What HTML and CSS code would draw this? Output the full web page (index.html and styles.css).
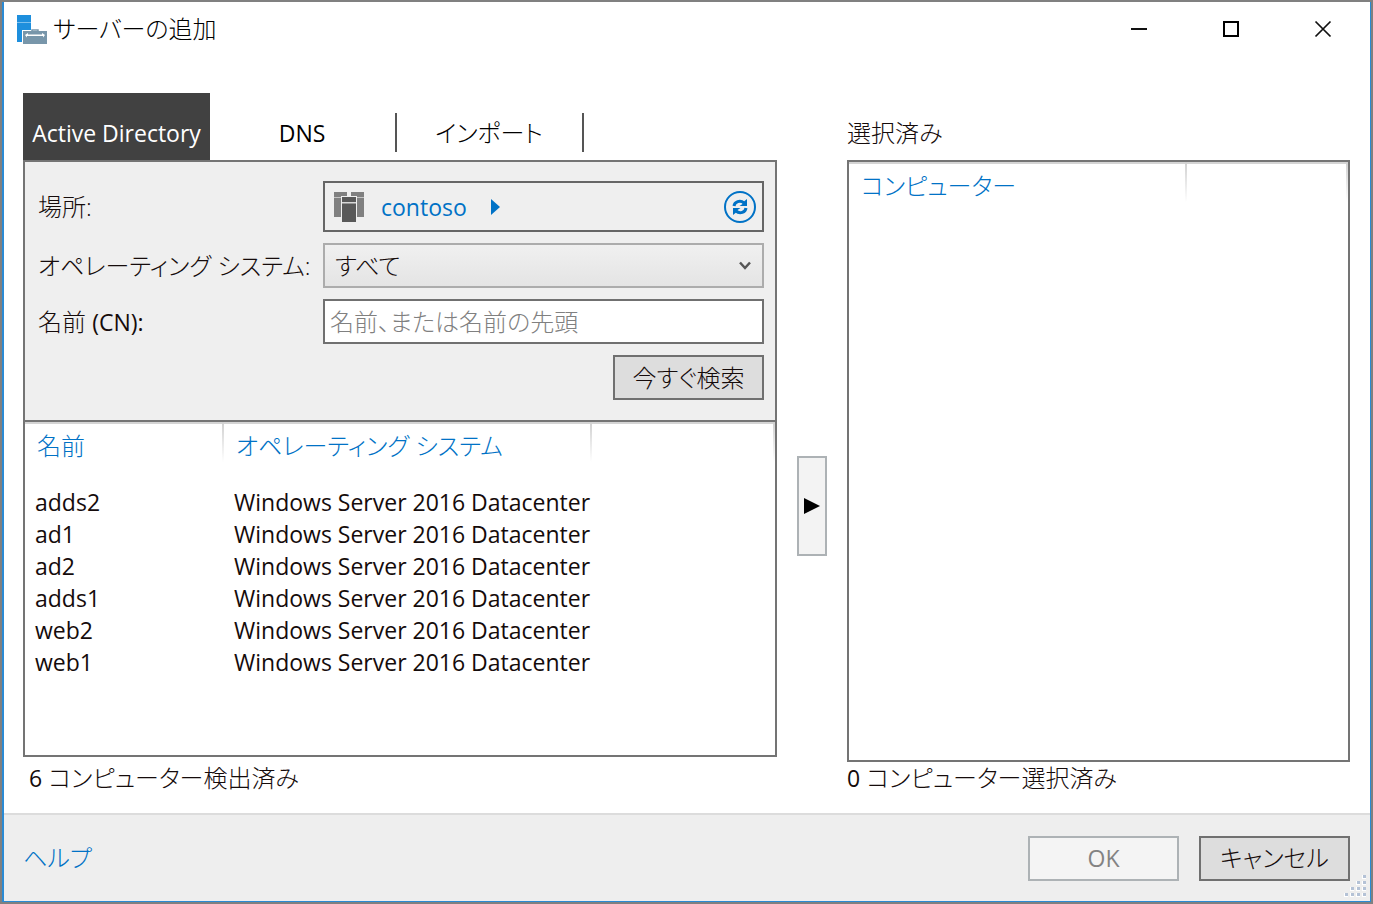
FILE: index.html
```html
<!DOCTYPE html>
<html lang="ja">
<head>
<meta charset="utf-8">
<title>サーバーの追加</title>
<link rel="stylesheet" href="styles.css">
</head>
<body>
<div class="window">
  <header class="titlebar">
    <svg class="app-icon" width="31" height="30" viewBox="0 0 31 30" aria-hidden="true">
      <path fill="#1e8fdd" d="M0 1h14v27H0z"/>
      <path fill="#7cc0ee" d="M0 8h14v1H0z"/>
      <path fill="#fff" d="M5 16h9v-2h9v2h8v14H5z"/>
      <path fill="none" stroke="#7896aa" stroke-width="1.500" d="M15 18v-2h6v2"/>
      <path fill="#7896aa" d="M6 17h24v13H6z"/>
      <path fill="#fff" d="M8 21l3-2v1.500h14V19l3 2-2 2.500v-1.500H10v1.500z"/>
    </svg>
    <h1 class="title">サーバーの追加</h1>
    <div class="window-controls">
      <button class="window-button" type="button" aria-label="最小化"><svg width="18" height="18" viewBox="0 0 18 18"><path d="M1 9h16" stroke="#111" stroke-width="2"/></svg></button>
      <button class="window-button" type="button" aria-label="最大化"><svg width="18" height="18" viewBox="0 0 18 18"><path d="M2 2h14v14H2z" fill="none" stroke="#000" stroke-width="2"/></svg></button>
      <button class="window-button" type="button" aria-label="閉じる"><svg width="18" height="18" viewBox="0 0 18 18"><path d="M1.500 1.500l15 15M16.500 1.500l-15 15" stroke="#111" stroke-width="1.700"/></svg></button>
    </div>
  </header>

  <main class="content">
    <section class="source">
      <div class="tabs" role="tablist">
        <button class="tab tab-active latin" type="button" role="tab" aria-selected="true">Active Directory</button>
        <button class="tab latin" type="button" role="tab" aria-selected="false">DNS</button>
        <button class="tab" type="button" role="tab" aria-selected="false">インポート</button>
      </div>
      <div class="panel source-panel">
        <form class="search">
          <span class="label" id="location-label">場所:</span>
          <div class="location" role="group" aria-labelledby="location-label">
            <svg width="32" height="32" viewBox="0 0 32 32" aria-hidden="true">
              <path fill="#808080" d="M1 1h13v25H1zM18 1h13v25H18z"/>
              <path fill="#c4c4c4" d="M1 6h13v1H1zM18 6h13v1H18z"/>
              <path fill="#efefef" d="M8 5h16v27H8z"/>
              <path fill="#595959" d="M9 6h14v25H9z"/>
              <path fill="#d8d8d8" d="M9 11h14v1.500H9z"/>
            </svg>
            <button class="crumb latin" type="button">contoso<svg width="9" height="16" viewBox="0 0 9 16" aria-hidden="true"><path fill="#0072c6" d="M0 0l9 8-9 8z"/></svg></button>
            <button class="refresh" type="button" aria-label="更新">
              <svg width="32" height="32" viewBox="0 0 32 32" fill="none" stroke="#0072c6">
                <circle cx="16" cy="16" r="15" stroke-width="2"/>
                <path stroke-width="3" d="M10 15c.5-4 6-6.500 10-3M22 17c-.5 4-6 6.500-10 3"/>
                <path fill="#0072c6" stroke="none" d="M23 8v7h-7.500l3-2 2-3zM9 24v-7h7.500l-3 2-2 3z"/>
              </svg>
            </button>
          </div>
          <label class="label" for="os">オペレーティング システム:</label>
          <div class="select">
            <select class="select-field" id="os"><option>すべて</option></select>
            <svg class="select-arrow" width="12" height="10" viewBox="0 0 12 10" aria-hidden="true"><path fill="none" stroke="#555" stroke-width="2.500" d="M1 1.500l5 5.500 5-5.500"/></svg>
          </div>
          <label class="label" for="cn">名前 <span class="latin">(CN):</span></label>
          <input class="text-field" id="cn" type="text" placeholder="名前、または名前の先頭">
          <button class="button search-button" type="button">今すぐ検索</button>
        </form>
        <table class="list">
          <colgroup><col class="col-name"><col class="col-os"><col></colgroup>
          <thead><tr><th>名前</th><th>オペレーティング システム</th><th></th></tr></thead>
          <tbody class="latin">
            <tr><td>adds2</td><td>Windows Server 2016 Datacenter</td><td></td></tr>
            <tr><td>ad1</td><td>Windows Server 2016 Datacenter</td><td></td></tr>
            <tr><td>ad2</td><td>Windows Server 2016 Datacenter</td><td></td></tr>
            <tr><td>adds1</td><td>Windows Server 2016 Datacenter</td><td></td></tr>
            <tr><td>web2</td><td>Windows Server 2016 Datacenter</td><td></td></tr>
            <tr><td>web1</td><td>Windows Server 2016 Datacenter</td><td></td></tr>
          </tbody>
        </table>
      </div>
      <p class="status"><span class="latin">6</span> コンピューター検出済み</p>
    </section>

    <button class="add" type="button" aria-label="追加"><svg width="16" height="16" viewBox="0 0 16 16"><path d="M0 0l16 8-16 8z"/></svg></button>

    <section class="selected">
      <h2 class="heading">選択済み</h2>
      <div class="panel">
        <table class="list">
          <colgroup><col class="col-computer"><col></colgroup>
          <thead><tr><th>コンピューター</th><th></th></tr></thead>
        </table>
      </div>
      <p class="status"><span class="latin">0</span> コンピューター選択済み</p>
    </section>
  </main>

  <footer class="footer">
    <a class="help" href="#">ヘルプ</a>
    <button class="button latin" type="button" disabled>OK</button>
    <button class="button" type="button">キャンセル</button>
    <svg class="grip" width="24" height="24" viewBox="0 0 24 24" aria-hidden="true">
      <path fill="#fff" d="M19 1h4v4h-4zM13 7h4v4h-4zM19 7h4v4h-4zM7 13h4v4H7zM13 13h4v4h-4zM19 13h4v4h-4zM1 19h4v4H1zM7 19h4v4H7zM13 19h4v4h-4zM19 19h4v4h-4z"/>
      <path fill="#b4c2d6" d="M20 1h3v3h-3zM14 7h3v3h-3zM20 7h3v3h-3zM8 13h3v3H8zM14 13h3v3h-3zM20 13h3v3h-3zM2 19h3v3H2zM8 19h3v3H8zM14 19h3v3h-3zM20 19h3v3h-3z"/>
    </svg>
  </footer>
</div>
</body>
</html>
```
FILE: styles.css
```css
* {
  box-sizing: border-box;
}

body {
  margin: 0;
  font-family: "Open Sans", "Noto Sans CJK JP", sans-serif;
  font-size: 24px;
  font-weight: 300;
  line-height: 32px;
  font-feature-settings: "palt";
  color: #150b0b;
}

button,
input,
select {
  font: inherit;
  font-feature-settings: inherit;
  color: inherit;
  border-radius: 0;
}

h1,
h2,
p {
  margin: 0;
  font-size: inherit;
  font-weight: inherit;
}

.latin {
  font-size: 23px;
  font-weight: 400;
}

.window {
  display: flex;
  flex-direction: column;
  min-height: 100vh;
  border: 2px solid #808080;
  background: #fff;
  box-shadow: inset 2px 0 #2a8ad4, inset -1px 0 #2a8ad4, inset 0 -1px #2a8ad4;
}

.titlebar {
  display: flex;
  align-items: center;
  gap: 5px;
  height: 54px;
  padding: 0 2px 0 15px;
}

.title {
  flex: 1;
  color: #000;
}

.window-controls {
  display: flex;
}

.window-button {
  display: grid;
  place-items: center;
  width: 92px;
  height: 54px;
  padding: 0;
  border: 0;
  background: none;
}

.content {
  flex: 1;
  display: grid;
  grid-template-columns: 754fr 30px 503fr;
  gap: 20px;
  padding: 37px 21px 19px;
}

.source,
.selected {
  display: flex;
  flex-direction: column;
}

.tabs {
  display: flex;
  height: 67px;
}

.tab {
  position: relative;
  width: 187px;
  padding: 13px 3px 0 0;
  border: 0;
  background: none;
  color: #000;
}

.tab:not(.tab-active)::after {
  content: "";
  position: absolute;
  top: 20px;
  right: 0;
  width: 2px;
  height: 39px;
  background: #555;
}

.tab-active {
  padding-right: 0;
  background: #414141;
  color: #fff;
}

.panel {
  flex: 1;
  border: 2px solid #747474;
}

.search {
  display: grid;
  grid-template-columns: 285px 1fr;
  gap: 11px 0;
  align-items: center;
  padding: 19px 11px 20px 13px;
  border-bottom: 2px solid #747474;
  background: #efefef;
}

.label {
  white-space: nowrap;
}

.location {
  display: flex;
  align-items: center;
  gap: 16px;
  height: 51px;
  padding: 0 6px 0 8px;
  border: 2px solid #666;
}

.crumb,
.refresh {
  display: flex;
  align-items: center;
  gap: 24px;
  padding: 0;
  border: 0;
  background: none;
  color: #0072c6;
}

.refresh {
  margin-left: auto;
}

.select {
  display: grid;
  align-items: center;
}

.select-field,
.select-arrow {
  grid-area: 1 / 1;
}

.select-field {
  appearance: none;
  width: 100%;
  height: 45px;
  padding: 0 10px;
  border: 2px solid #acacac;
  background: linear-gradient(#f0f0f0, #e4e4e4);
}

.select-arrow {
  justify-self: end;
  margin-right: 13px;
  pointer-events: none;
}

.text-field {
  width: 100%;
  height: 45px;
  padding: 0 5px;
  border: 2px solid #707070;
  background: #fff;
}

.text-field::placeholder {
  color: #808080;
  opacity: 1;
}

.button {
  width: 151px;
  height: 45px;
  padding: 0;
  border: 2px solid #707070;
  background: #ddd;
}

.button:disabled {
  border-color: #adb2b5;
  background: #f4f4f4;
  color: #838383;
}

.search-button {
  grid-column: 2;
  justify-self: end;
}

.list {
  width: 100%;
  table-layout: fixed;
  border-collapse: collapse;
  box-shadow: inset 0 2px #d4d4d4;
}

.col-name {
  width: 199px;
}

.col-os {
  width: 368px;
}

.col-computer {
  width: 338px;
}

.list th,
.list td {
  padding: 0 10px;
  text-align: left;
  white-space: nowrap;
}

.list th {
  height: 48px;
  padding: 0 12px;
  font-weight: inherit;
  color: #0072c6;
  background: linear-gradient(#d0d0d0, #fff 40px) right top / 2px 40px no-repeat;
}

.list tbody::before {
  content: "";
  display: block;
  height: 16px;
}

.status {
  padding: 5px 0 0 6px;
}

.selected .status {
  padding: 0;
}

.heading {
  height: 67px;
  padding-top: 24px;
}

.add {
  align-self: center;
  display: grid;
  place-items: center;
  height: 100px;
  margin-top: 124px;
  padding: 0;
  border: 2px solid #adb2b5;
  background: #f3f3f3;
}

.footer {
  position: relative;
  display: flex;
  align-items: center;
  gap: 20px;
  height: 88px;
  margin: 0 1px 1px 2px;
  padding: 0 20px 0 19px;
  border-top: 2px solid #dcdcdc;
  background: #eee;
}

.help {
  margin-right: auto;
  color: #0072c6;
  text-decoration: none;
}

.grip {
  position: absolute;
  right: 3px;
  bottom: 3px;
}
```
